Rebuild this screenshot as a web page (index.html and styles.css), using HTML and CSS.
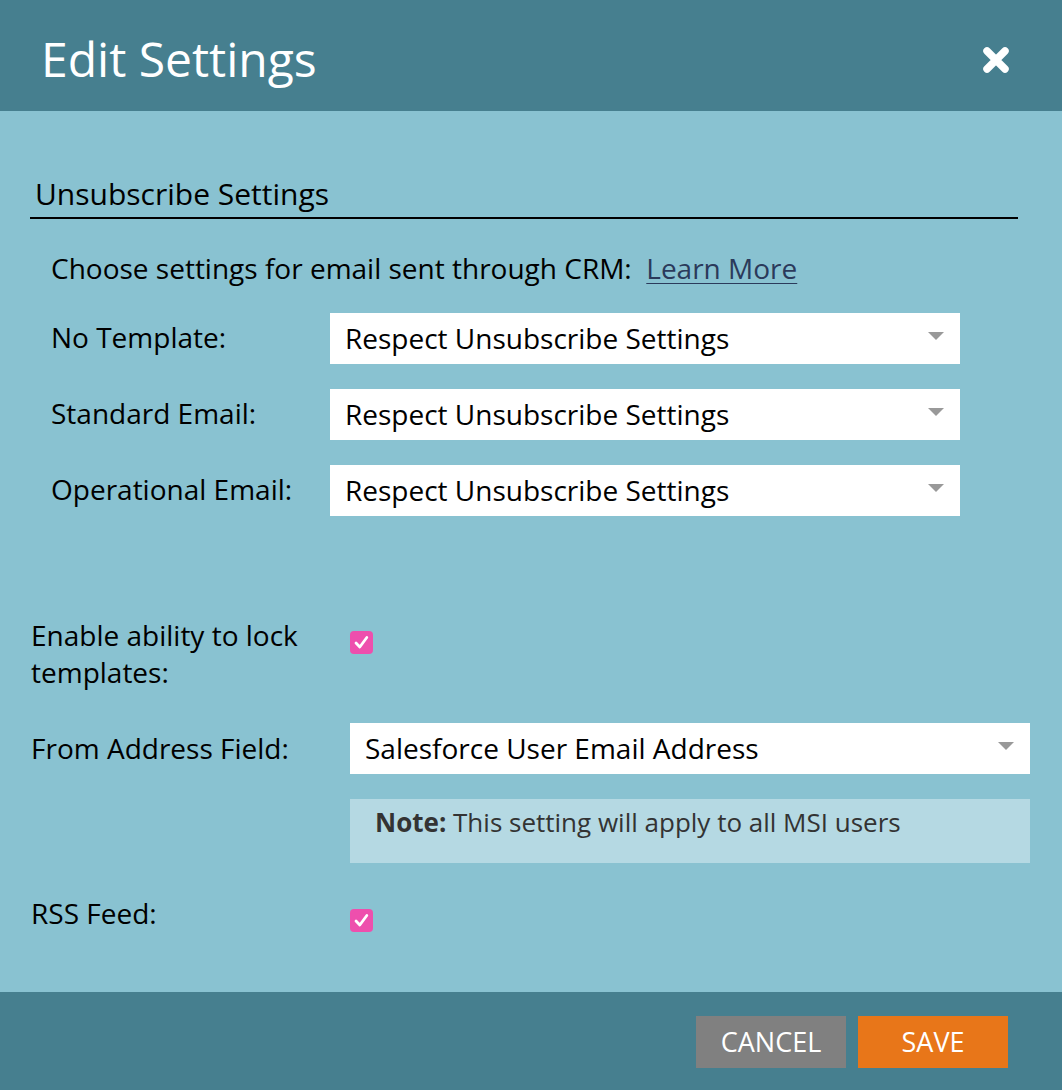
FILE: index.html
```html
<!DOCTYPE html>
<html>
<head>
<meta charset="utf-8">
<link rel="stylesheet" href="styles.css">
</head>
<body>
<div class="dialog">
  <header class="header">
    <h1 class="title">Edit Settings</h1>
    <button class="close" aria-label="Close">
      <svg width="30" height="30" viewBox="0 0 30 30"><path d="M6 6 L24 24 M24 6 L6 24" stroke="#fff" stroke-width="7.5" stroke-linecap="round" fill="none"/></svg>
    </button>
  </header>
  <main class="content">
    <section class="unsub">
      <h2 class="section-title">Unsubscribe Settings</h2>
      <p class="intro">Choose settings for email sent through CRM:&nbsp; <a class="link" href="#">Learn More</a></p>
      <div class="grid-top">
        <div class="label">No Template:</div>
        <div class="select"><span class="select-text">Respect Unsubscribe Settings</span><span class="arrow"></span></div>
        <div class="label">Standard Email:</div>
        <div class="select"><span class="select-text">Respect Unsubscribe Settings</span><span class="arrow"></span></div>
        <div class="label">Operational Email:</div>
        <div class="select"><span class="select-text">Respect Unsubscribe Settings</span><span class="arrow"></span></div>
      </div>
    </section>
    <section class="grid-bottom">
      <div class="label2">Enable ability to lock<br>templates:</div>
      <div class="check-cell"><span class="checkbox"><svg width="23" height="23" viewBox="0 0 23 23"><path d="M6 12 L9.8 16 L16.8 6.5" stroke="#fff" stroke-width="2.8" fill="none" stroke-linecap="round" stroke-linejoin="round"/></svg></span></div>
      <div class="label2 mid">From Address Field:</div>
      <div class="select wide"><span class="select-text">Salesforce User Email Address</span><span class="arrow"></span></div>
      <div></div>
      <div class="note"><b>Note:</b> This setting will apply to all MSI users</div>
      <div class="label2">RSS Feed:</div>
      <div class="check-cell"><span class="checkbox"><svg width="23" height="23" viewBox="0 0 23 23"><path d="M6 12 L9.8 16 L16.8 6.5" stroke="#fff" stroke-width="2.8" fill="none" stroke-linecap="round" stroke-linejoin="round"/></svg></span></div>
    </section>
  </main>
  <footer class="footer">
    <button class="btn cancel">CANCEL</button>
    <button class="btn save">SAVE</button>
  </footer>
</div>
</body>
</html>
```
FILE: styles.css
```css
* { box-sizing: border-box; }
html, body { margin: 0; padding: 0; }
body {
  font-family: "Open Sans", "Noto Sans", sans-serif;
  background: #89c2d1;
  color: #000;
}
.dialog {
  width: 1062px;
  height: 1090px;
  display: flex;
  flex-direction: column;
  background: #89c2d1;
}
.header {
  height: 111px;
  background: #467f8f;
  display: flex;
  align-items: flex-start;
  justify-content: space-between;
  padding: 31px 51px 0 41px;
}
.title {
  margin: 0;
  font-weight: 400;
  font-size: 48px;
  line-height: 56px;
  color: #fff;
}
.close {
  border: 0;
  background: none;
  padding: 0;
  margin-top: 14px;
  width: 30px;
  height: 30px;
  cursor: pointer;
}
.close svg { display: block; }
.content {
  flex: 1;
  padding: 65px 32px 0 30px;
}
.unsub { margin-right: 12px; }
.section-title {
  margin: 0;
  font-weight: 400;
  font-size: 30px;
  line-height: 36px;
  padding: 0 0 5px 5px;
  border-bottom: 2px solid #000;
}
.intro {
  margin: 31px 0 26px 21px;
  font-size: 28px;
  line-height: 37px;
}
.link {
  color: #2b3a5b;
  text-decoration: underline;
  text-underline-offset: 4px;
  text-decoration-thickness: 1px;
}
.grid-top {
  display: grid;
  grid-template-columns: 279px 630px;
  row-gap: 25px;
  padding-left: 21px;
}
.label {
  font-size: 28px;
  line-height: 37px;
  align-self: center;
  margin-top: -2px;
}
.select {
  height: 51px;
  background: #fff;
  display: flex;
  align-items: center;
  justify-content: space-between;
  padding: 0 16px 0 15px;
}
.select-text {
  font-size: 28px;
  line-height: 37px;
  color: #000;
}
.arrow {
  width: 0;
  height: 0;
  border-left: 8px solid transparent;
  border-right: 8px solid transparent;
  border-top: 8px solid #999;
  margin-top: -6px;
}
.grid-bottom {
  display: grid;
  grid-template-columns: 319px 680px;
  margin-top: 101px;
  padding-left: 1px;
}
.label2 {
  font-size: 28px;
  line-height: 37px;
}
.label2.mid { align-self: center; margin-top: 32px; }
.check-cell { padding-top: 14px; }
.checkbox {
  display: block;
  width: 23px;
  height: 23px;
  border-radius: 4px;
  background: #ee4fad;
}
.checkbox svg { display: block; }
.select.wide { margin-top: 32px; }
.note {
  margin-top: 25px;
  margin-bottom: 32px;
  height: 64px;
  background: #b5d9e3;
  padding: 7px 20px 0 25px;
  font-size: 26px;
  line-height: 32px;
  color: #333;
}
.note b { font-weight: 700; }
.footer {
  height: 98px;
  background: #467f8f;
  display: flex;
  justify-content: flex-end;
  align-items: flex-start;
  gap: 12px;
  padding: 24px 54px 0 0;
}
.btn {
  width: 150px;
  height: 52px;
  border: 0;
  color: #fff;
  font-family: "Open Sans", "Noto Sans", sans-serif;
  font-size: 27px;
  line-height: 52px;
  padding: 0;
  cursor: pointer;
}
.cancel { background: #808080; }
.save { background: #e87619; }
```
